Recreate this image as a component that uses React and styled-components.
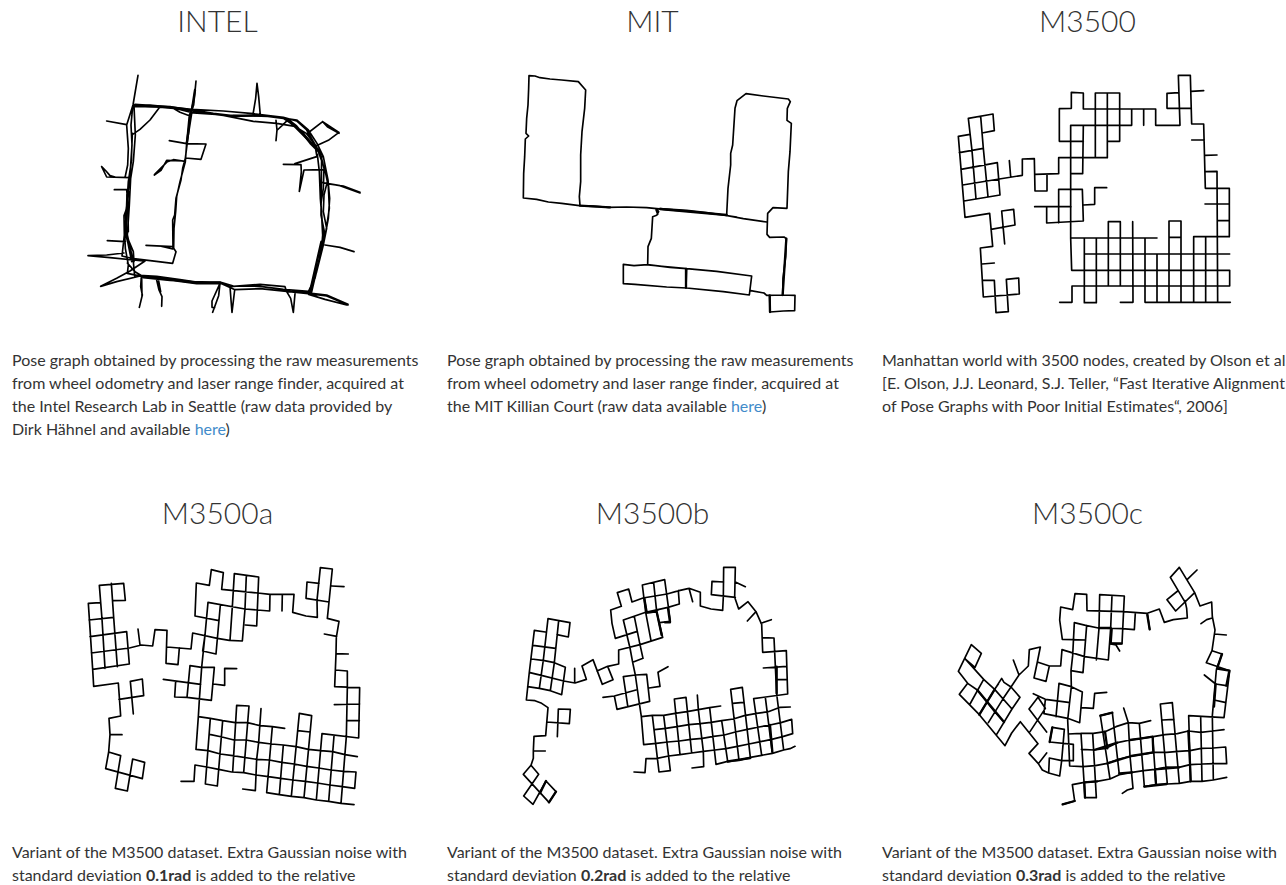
import React from "react";
import styled, { createGlobalStyle } from "styled-components";

const GlobalStyle = createGlobalStyle`
  html {
    overflow: hidden;
  }
  body {
    margin: 0;
    background: #fff;
    color: #333;
    font: 400 16px/23px Lato, "Liberation Sans", sans-serif;
    font-variant-ligatures: no-common-ligatures;
  }
`;

const Gallery = styled.main`
  display: grid;
  grid-template-columns: repeat(3, minmax(0, 1fr));
  column-gap: 30px;
  row-gap: 52px;
  margin: 0 -4px 0 15px;
`;

const Card = styled.article`
  display: flex;
  flex-direction: column;
`;

const Title = styled.h2`
  margin: 0;
  padding: 2px 0 27px;
  font-size: 30px;
  font-weight: 300;
  line-height: 36px;
  text-align: center;
`;

const Plot = styled.svg`
  display: block;
  width: 100%;
  height: auto;
  fill: none;
  stroke: #000;
  stroke-width: 5;
  stroke-linecap: round;
  stroke-linejoin: round;
`;

const Caption = styled.p`
  margin: 0 -3px;
  padding-top: 23px;
`;

const Link = styled.a`
  color: #428bca;
  text-decoration: none;
`;

const intel = `
M174 31L159 120L140 180L145 250L143 300L135 338
M348 48L343 100L330 150L326 200L316 280L308 310L303 345L288 400L284 450L278 465L279 550
M345 75L341 120L328 150L320 235L316 290L300 350L290 395L287 440L282 490L281 550L288 560L278 595L155 580L126 573
M80 168L140 179 M65 305L80 336L150 338 M65 305L78 318L90 332L105 336 M103 374L145 374
M82 527L136 530 M24 572L80 570L132 564 M24 572L90 578L190 588
M62 664L110 640L150 618L195 588 M62 664L110 650L180 633
M159 120L210 120L270 126L335 133L430 138L520 146L610 157L650 168L680 195L712 250
M162 124L230 126L290 131L340 144L430 150L520 153L585 155L625 163L650 183L690 230L722 260
M165 118L240 123L310 130L400 145L470 153L540 151L610 160L640 180L665 198L700 242L720 258
M280 130L300 142L330 153 M340 140L430 151L520 169L590 175L645 184L680 206L705 240L710 270
M240 125L210 165L180 193L157 209 M162 122L166 210L160 290L152 340L148 420L142 510L160 590L164 633
M158 125L153 180L156 240L150 330L143 390L145 500 M157 205L154 290L145 350L140 430L135 500L144 535L155 590
M140 374L144 420L132 452L133 510L126 573 M146 380L137 450L139 510L160 560L162 590
M138 460L134 500L136 550L145 600L142 625L185 634 M142 594L165 620L185 632
M268 227L320 236L378 237L363 283L316 279 M223 330L243 316L260 286L312 288 M224 328L262 290L280 284L315 289
M198 541L240 543L278 552 M198 541L278 545
M531 55L536 95L541 152 M531 55L527 100L519 148
M588 166L591 195L588 227 M592 195L610 178L625 163
M615 160L650 165L685 195L711 235L730 275L744 345L749 400L745 460L730 540L710 620L690 682
M625 165L655 190L690 235L715 260L735 315L745 365L748 430L736 510L720 575L705 640L685 680
M720 260L732 310L730 370L723 415L728 510L724 560L698 650L690 685
M712 268L718 320L721 400L730 510L716 590L694 685
M725 275L724 350L723 450L735 510L728 540 M742 350L732 390L730 440L740 490L732 530
M680 207L728 170L777 202L745 226L709 242 M728 170L742 185L777 205
M610 298L663 299L664 320L658 379 M645 296L710 275 M658 379L672 315L730 314
M723 352L780 362L840 384 M740 356L790 363L840 382
M735 540L780 547L822 560
M165 630L230 634L300 644L350 651L420 651L460 663L540 664L610 673L685 679
M180 632L260 644L350 656L420 655L450 665L540 658L615 665L620 680L690 682
M190 638L270 646L340 650L415 652L465 674L540 671L620 679L685 686L740 693L804 720
M688 684L740 690L804 718 M686 688L735 703L800 720
M184 635L182 665L187 690L178 727 M185 635L186 695
M230 645L237 675L246 695L245 724 M236 648L242 680
M420 655L396 708V727L404 728 M420 655L416 692L398 742
M450 665L453 705L456 742L464 675 M620 680L632 700L640 742L645 686
`;

const mit = `
M57 32L75 33L90 38L120 42L155 45L205 50L227 75L224 130L216 200L212 270L212 350L208 395L210 422
M57 32L56 70L54 120L50 160L48 205L56 213L46 222L44 275L41 325L40 399L80 403L115 411L155 415L208 422
M208 422L250 423L295 427L350 426L410 428L470 434L560 441L640 450L700 461L770 471
M215 423L290 426 M450 431L530 436L590 443L680 456
M650 450L654 370L662 300L662 265L668 240L675 130L681 107L708 86L760 93L835 102L841 110L832 130L831 166L844 175L840 260L835 320L831 430L789 428L773 445L771 508L779 517L822 516L829 521L827 575L819 640L818 690
M440 431L446 440L440 451L428 455L424 520L414 545L413 600M438 434L443 448
M340 598L372 602L413 599L480 607L530 611L620 619L725 633L718 690L640 680L530 669L470 666L375 658L340 656Z
M530 611L528 668M415 600L530 611M722 677L762 684L770 691L818 690L855 691L854 737L820 738L780 741L779 691
`;

const m3500 = `
M55 160L129 147L133 197L96 204M25 214L60 208M28 263L100 250M33 313L142 293L150 390L42 408
M38 360L148 342L217 331V282L253 281L255 378H291V328M255 328L326 326V278H472V84
M25 214L45 457L119 445L128 544L91 549L100 696L208 687L206 639L169 643L175 740L138 743L133 646L98 646
M55 160L66 257L78 402M92 154L100 250L114 395M96 597L133 594M123 493L195 480L191 433L155 438L164 537
M178 287L182 335M400 229H328V131L364 130V82L400 84V132H617V181H690L685 31H721L725 177H761L766 370H838V515H731
M723 130H651V85L687 83M723 79L761 77M725 225H763M765 271L801 270M765 320L801 319L803 712
M765 417H838M803 467H838M365 616L362 519V181H545V132M400 181L398 326H363M436 278V84L509 84V229H473M581 132V181
M363 373H326V474M290 425V474L400 468L397 373H363M254 425H363M400 420L434 418V368H470
M364 519H621M403 567H839M366 616H839V663H366V712H329M403 519V713H439V519M475 663V470H511V663
M548 470L549 712H511M585 519V712H841M621 567V712M657 712V468H693V712M657 517H693M731 515V712M767 515V712
`;

const m3500a = `
M25 130L60 128M25 130L38 328L41 379L115 369L122 468L87 475L90 524H126M58 76L66 177L75 325
M94 70L101 172L112 320M58 76L131 70L136 121L99 122M27 180L101 172M30 230L140 215L148 312L38 328
M34 279L148 264L184 255L218 258L225 209L261 211L258 310L294 314L298 264M174 207L180 255
M90 524L86 576L77 626L187 656L194 607L158 597L142 693L106 685L122 587L86 576
M117 418L191 407L187 357L151 364L160 462M261 261L333 267L338 219L412 235L448 241L487 243
M417 182L345 168L349 69L388 76L394 29L430 38L425 88L462 92L533 99L570 103H642L638 157L678 168L712 172L711 121
M463 41L536 51L530 198L496 195M463 41L457 140L450 241M499 46L495 147L487 243
M384 127L495 147L569 153L570 103M384 127L375 225L368 273L408 282L421 135M607 103L606 153
M717 70L681 66L678 115L747 126M711 121L721 23L757 27L747 126L742 175L777 184L769 232L768 281L764 380L839 383L836 534L726 521
M755 78L792 80M733 222L770 229M768 281L805 282M766 330L802 333V383L799 530L783 730M763 434L839 432M802 482H838
M375 225L365 322L358 420L355 470L348 568M365 322L330 317L321 412M365 322H403L394 421L321 412L284 411L287 363
M250 358L362 373M400 372L434 376V325L470 326
M355 470L391 475L428 482L466 488H502L540 497L577 500L614 505
M389 523L426 531L462 540H498L536 547L574 552L610 555L648 560L685 568L722 572L758 575L795 584L832 590
M348 568L384 572L421 582L458 587L530 598L568 600L605 607L642 612L680 619L716 624L753 630L790 634L828 636L824 685
M303 664H342L345 615L380 621L416 628L455 636L491 638L528 645L565 650L602 655L638 660L676 664L712 669L749 675L787 680L824 685
M560 698L598 704L634 709L672 713L709 720L746 724L783 730L822 734
M391 475L376 672L412 678L428 482M458 636L470 436L507 438L491 638M543 446L536 547L530 598L526 692L488 687
M577 500L560 698M610 555L598 704M634 709L658 460L695 467L672 713M653 512L690 516M726 521L709 720M762 528L746 724
`;

const m3500b = `
M91 216L58 211L43 336L34 420M99 176L85 300L73 385M131 182L118 308L106 392M99 176L165 188L160 231L126 224
M54 256L122 265M50 297L88 302L118 308L151 322L140 404L106 392L73 385L38 380
M45 338L82 347L146 363L180 369L214 358L201 318L234 299L262 373L294 359L278 319M179 325V369
M34 420L60 422L80 430L99 443L92 527L57 529L55 573H91M55 573V595L48 616L25 643L102 727L123 695L93 663L54 733L26 708L71 643L48 616
M95 486L163 491L166 448L130 447L127 530M246 333L278 319L311 312V270L375 254L443 232
M367 214L301 235L291 190L287 150L319 139L307 98L341 87L351 126L384 114L456 102L492 92L522 85L556 97V138L588 147L623 151L625 110
M382 75L449 59L466 184L433 188M382 75L392 157L408 242M416 68L425 155L443 232
M325 180L392 157L459 142L493 132L490 92M325 180L345 264L353 307L384 295L375 254L358 170M522 85L533 125
M353 307L361 345L373 430L379 470L386 554M361 345L325 350L338 437M361 345L395 343L404 424L306 448L298 408
M264 412L298 408L363 390M402 384L435 379L429 337L459 320
M626 66L591 64L589 104L661 112M625 110L626 22H661L659 112L671 147L699 125L723 155L740 193L743 277L814 272L818 402L716 416
M661 66L691 80M723 155L697 183M738 190L769 179M742 233L777 234L785 402L806 570M745 324L815 319M784 359L816 358
M379 470L412 466H446L480 460L516 455L550 449L584 443L617 438
M419 509L452 505L486 500L522 494L556 491L588 487L620 482L655 477L688 467L725 460L760 455L795 442L826 441
M386 554L424 550L458 546L493 543L528 538L562 535L596 529L628 525L661 516L697 508L732 501L765 495L798 488L830 478L833 521
M357 636L390 638L393 596L426 595L461 588L495 584L530 579L565 574L600 570L633 566L667 559L702 552L737 545L770 538L803 530L833 521
M603 613L638 604L672 601L706 592L740 586L772 580L806 570L825 566L840 559
M412 466L432 636L466 632L446 466M495 584L478 417L513 412L530 579M547 405L550 449L565 574L566 620L531 624
M584 443L603 613M620 482L638 604M672 601L647 388L682 382L706 592M653 430L685 427M716 416L740 586M751 412L772 580
M388 115L395 157L430 150M395 159L425 155L440 225M638 606L706 594
`;

const m3500c = `
M47 298L75 322L94 280L64 254L25 334L53 370L28 403L88 464L165 557L185 519L211 485L264 551L237 580L265 611L277 630L296 639L329 648L335 602L298 594L296 639
M47 298L101 358L60 432M53 370L82 390L134 455L162 486M101 358L134 388L186 447L140 523M134 388L88 464
M134 388L155 355L162 367L183 381L210 412L186 447M183 381L160 415L115 488M134 388L145 372
M183 381L207 345L235 318L238 269L271 261L262 306L252 354L288 364L298 318M190 300L207 345
M262 306L298 318H332L336 269L404 290L475 300M264 412L237 447L290 516M264 412L286 445L240 515M265 611L290 579
M299 546L307 502L343 508L335 602H370V553ZM407 240L337 238L329 180L332 141L368 149L375 101L410 103L411 152L520 155L592 160L628 147L643 187L670 179L712 174L710 145L705 122
M449 104L523 108L516 252L480 250M449 104L447 205L439 300M486 106L482 205L475 300
M373 188L407 196L445 204L516 206L553 209L556 158M373 188L368 287L363 332L399 338L410 196M592 160L599 208M482 252L498 255L509 273
M363 332L364 380L353 480L355 522L359 618M364 380L327 370L318 470M364 380L397 396L389 488L353 475L282 461L286 418
M250 401L286 418L355 427M395 443L430 445L434 400L470 397
M688 22L661 52L706 128M688 22L734 98L677 153L651 119L683 93M734 98L750 138L785 126L787 170L795 210L786 272L769 308L839 332L822 473L716 467
M712 58L741 30M787 174L770 179L753 191M793 222L829 225M786 272L816 282L799 330L787 467L790 660M763 345L797 372L829 377M792 420L825 427
M355 522L393 520H430L465 515L498 500L535 488L568 490L602 482
M394 568L432 570L468 565L502 548L540 540L575 535L610 530L645 524L682 521L715 513L752 517L788 513L822 509
M359 618L399 620L436 617L472 610L508 597L544 588L578 583L610 577H650L685 574L720 572L754 565L790 564L827 561L830 611
M338 733L374 723L367 674L403 667L441 664L480 657L508 644L546 637L581 632L615 628L650 621L687 622L720 614L757 612L793 611H830
M583 680L618 674L652 672L688 670L722 664H756L790 660L830 652
M393 520L405 713H439L428 520M480 657L451 467L487 458L508 644M521 444L535 488L540 588L549 685L532 690L517 700
M568 490L583 680M608 530L618 674M652 672L631 432L667 428L688 670M638 480L672 478M716 467L722 664M752 470L756 664
`;

const mitHeavy = `M210 422L300 427M450 432L650 450M528 612V668M829 521L818 690M779 691L780 741`;
const intelHeavy = `M165 121L270 126L335 137M142 390L138 500M190 634L350 653L420 653M625 165L690 230M345 75L320 235M460 153L540 151M724 530L690 680`;
const bHeavy = `M388 115L395 157L425 155L440 225M450 187H465L459 145M638 604L706 594M765 495L772 575M785 320V400M102 727L123 695M93 663L75 700`;
const cHeavy = `M447 204H482M485 208L482 250H514M592 165L599 208M575 535L608 530L610 577M715 513L720 610M583 680L650 672M88 464L134 388M465 515L472 565M540 540L575 535M816 282L801 326L838 332L829 377M508 640L546 637M299 546L307 502M451 467L487 458M432 570L502 548M472 610L544 588L610 577M618 674L615 628L687 622M405 713L403 667L441 664M374 723L338 733M722 664L720 614M797 372L792 440M82 390L162 486`;

const noiseText = (sigma) => (
  <>
    Variant of the M3500 dataset. Extra Gaussian noise with standard deviation{" "}
    <b>{sigma}</b> is added to the relative
  </>
);

const datasets = [
  {
    name: "INTEL",
    origin: [195, 0],
    path: intel,
    heavy: intelHeavy,
    text: (
      <>
        Pose graph obtained by processing the raw measurements from wheel
        odometry and laser range finder, acquired at the Intel Research Lab in
        Seattle (raw data provided by Dirk Hähnel and available{" "}
        <Link href="#intel">here</Link>)
      </>
    ),
  },
  {
    name: "MIT",
    origin: [180, 0],
    path: mit,
    heavy: mitHeavy,
    text: (
      <>
        Pose graph obtained by processing the raw measurements from wheel
        odometry and laser range finder, acquired at the MIT Killian Court (raw
        data available <Link href="#mit">here</Link>)
      </>
    ),
  },
  {
    name: "M3500",
    origin: [195, 0],
    path: m3500,
    text: (
      <>
        Manhattan world with 3500 nodes, created by Olson et al. [E. Olson, J.J.
        Leonard, S.J. Teller, “Fast Iterative Alignment of Pose Graphs with Poor
        Initial Estimates“, 2006]
      </>
    ),
  },
  { name: "M3500a", origin: [195, 9], path: m3500a, text: noiseText("0.1rad") },
  { name: "M3500b", origin: [195, 9], path: m3500b, heavy: bHeavy, text: noiseText("0.2rad") },
  { name: "M3500c", origin: [195, 9], path: m3500c, heavy: cHeavy, text: noiseText("0.3rad") },
];

export default function App() {
  return (
    <>
      <GlobalStyle />
      <Gallery>
        {datasets.map(({ name, origin, path, heavy, text }) => (
          <Card key={name}>
            <Title>{name}</Title>
            <Plot viewBox="0 0 1215 780" role="img" aria-label={`${name} pose graph`}>
              <g transform={`translate(${origin[0]} ${origin[1]})`}>
                <path d={path} />
                {heavy && <path d={heavy} strokeWidth="7" />}
              </g>
            </Plot>
            <Caption>{text}</Caption>
          </Card>
        ))}
      </Gallery>
    </>
  );
}
